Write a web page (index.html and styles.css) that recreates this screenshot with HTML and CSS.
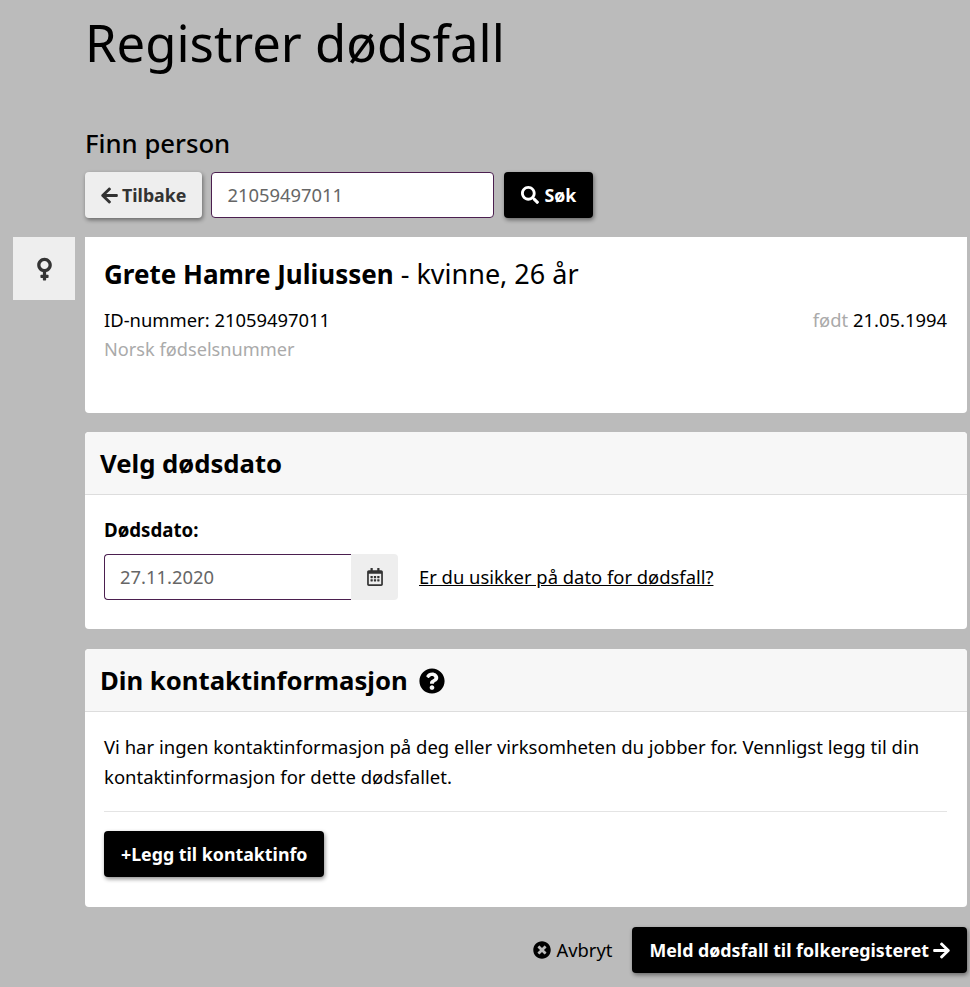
FILE: index.html
```html
<!DOCTYPE html>
<html lang="no">
  <head>
    <meta charset="UTF-8" />
    <meta name="viewport" content="width=device-width, initial-scale=1.0" />
    <title>Registrer dødsfall</title>
    <link rel="stylesheet" href="styles.css">
  </head>
  <body>
    <main class="page">
      <h1>Registrer dødsfall</h1>

      <h2 class="search-title">Finn person</h2>
      <div class="search-row">
        <button class="btn btn-light btn-back">
          <svg class="icon icon-arrow" viewBox="0 0 448 512"><path d="M257.5 445.1l-22.2 22.2c-9.4 9.4-24.6 9.4-33.9 0L7 273c-9.4-9.4-9.4-24.6 0-33.9L201.4 44.7c9.4-9.4 24.6-9.4 33.9 0l22.2 22.2c9.5 9.5 9.3 25-.4 34.3L136.6 216H424c13.3 0 24 10.7 24 24v32c0 13.3-10.7 24-24 24H136.6l120.5 114.8c9.8 9.3 10 24.8.4 34.3z"/></svg>
          Tilbake
        </button>
        <input class="field search-field" type="text" value="21059497011">
        <button class="btn btn-dark btn-search">
          <svg class="icon" viewBox="0 0 512 512"><path d="M505 442.7L405.3 343c-4.5-4.5-10.6-7-17-7H372c27.6-35.3 44-79.7 44-128C416 93.1 322.9 0 208 0S0 93.1 0 208s93.1 208 208 208c48.3 0 92.7-16.4 128-44v16.3c0 6.4 2.5 12.5 7 17l99.7 99.7c9.4 9.4 24.6 9.4 33.9 0l28.3-28.3c9.4-9.4 9.4-24.6.1-34zM208 336c-70.7 0-128-57.2-128-128 0-70.7 57.2-128 128-128 70.7 0 128 57.2 128 128 0 70.7-57.2 128-128 128z"/></svg>
          Søk
        </button>
      </div>

      <section class="card person">
        <div class="gender-tab">
          <svg class="gender-icon" viewBox="0 0 288 512"><path d="M288 176c0-79.5-64.5-144-144-144S0 96.5 0 176c0 68.5 47.9 125.9 112 140.4V368H76c-6.6 0-12 5.4-12 12v40c0 6.6 5.4 12 12 12h36v36c0 6.6 5.4 12 12 12h40c6.6 0 12-5.4 12-12v-36h36c6.6 0 12-5.4 12-12v-40c0-6.6-5.4-12-12-12h-36v-51.6c64.1-14.5 112-71.9 112-140.4zm-224 0c0-44.1 35.9-80 80-80s80 35.9 80 80-35.9 80-80 80-80-35.9-80-80z"/></svg>
        </div>
        <h3 class="person-name"><strong>Grete Hamre Juliussen</strong> - kvinne, 26 år</h3>
        <div class="person-row">
          <span>ID-nummer: 21059497011</span>
          <span><span class="muted">født</span> 21.05.1994</span>
        </div>
        <div class="muted person-type">Norsk fødselsnummer</div>
      </section>

      <section class="card">
        <h3 class="card-header">Velg dødsdato</h3>
        <div class="card-body date-body">
          <label class="date-label" for="dato">Dødsdato:</label>
          <div class="date-row">
            <input class="field date-field" id="dato" type="text" value="27.11.2020">
            <span class="date-addon">
              <svg class="icon" viewBox="0 0 448 512"><path d="M148 288h-40c-6.6 0-12-5.4-12-12v-40c0-6.6 5.4-12 12-12h40c6.6 0 12 5.4 12 12v40c0 6.6-5.4 12-12 12zm108-12v-40c0-6.6-5.4-12-12-12h-40c-6.6 0-12 5.4-12 12v40c0 6.6 5.4 12 12 12h40c6.6 0 12-5.4 12-12zm96 0v-40c0-6.6-5.4-12-12-12h-40c-6.6 0-12 5.4-12 12v40c0 6.6 5.4 12 12 12h40c6.6 0 12-5.4 12-12zm-96 96v-40c0-6.6-5.4-12-12-12h-40c-6.6 0-12 5.4-12 12v40c0 6.6 5.4 12 12 12h40c6.6 0 12-5.4 12-12zm-96 0v-40c0-6.6-5.4-12-12-12h-40c-6.6 0-12 5.4-12 12v40c0 6.6 5.4 12 12 12h40c6.6 0 12-5.4 12-12zm192 0v-40c0-6.6-5.4-12-12-12h-40c-6.6 0-12 5.4-12 12v40c0 6.6 5.4 12 12 12h40c6.6 0 12-5.4 12-12zm96-260v352c0 26.5-21.5 48-48 48H48c-26.5 0-48-21.5-48-48V112c0-26.5 21.5-48 48-48h48V12c0-6.6 5.4-12 12-12h40c6.6 0 12 5.4 12 12v52h128V12c0-6.6 5.4-12 12-12h40c6.6 0 12 5.4 12 12v52h48c26.5 0 48 21.5 48 48zm-48 346V160H48v298c0 3.3 2.7 6 6 6h340c3.3 0 6-2.7 6-6z"/></svg>
            </span>
            <a class="date-link" href="#">Er du usikker på dato for dødsfall?</a>
          </div>
        </div>
      </section>

      <section class="card">
        <h3 class="card-header">
          Din kontaktinformasjon
          <svg class="help-icon" viewBox="0 0 512 512"><path d="M504 256c0 136.997-111.043 248-248 248S8 392.997 8 256C8 119.083 119.043 8 256 8s248 111.083 248 248zM262.655 90c-54.497 0-89.255 22.957-116.549 63.758-3.536 5.286-2.353 12.415 2.715 16.258l34.699 26.31c5.205 3.947 12.621 3.008 16.665-2.122 17.864-22.658 30.113-35.797 57.303-35.797 20.429 0 45.698 13.148 45.698 32.958 0 14.976-12.363 22.667-32.534 33.976C247.128 238.528 216 254.941 216 296v4c0 6.627 5.373 12 12 12h56c6.627 0 12-5.373 12-12v-1.333c0-28.462 83.186-29.647 83.186-106.667 0-58.002-60.165-102-116.531-102zM256 338c-25.365 0-46 20.635-46 46 0 25.364 20.635 46 46 46s46-20.636 46-46c0-25.365-20.635-46-46-46z"/></svg>
        </h3>
        <div class="card-body contact-body">
          <p class="contact-text">Vi har ingen kontaktinformasjon på deg eller virksomheten du jobber for. Vennligst legg til din kontaktinformasjon for dette dødsfallet.</p>
          <hr class="divider">
          <button class="btn btn-dark">+Legg til kontaktinfo</button>
        </div>
      </section>

      <div class="actions">
        <a class="cancel" href="#">
          <svg class="icon" viewBox="0 0 512 512"><path d="M256 8C119 8 8 119 8 256s111 248 248 248 248-111 248-248S393 8 256 8zm121.6 313.1c4.7 4.7 4.7 12.3 0 17L338 377.6c-4.7 4.7-12.3 4.7-17 0L256 312l-65.1 65.6c-4.7 4.7-12.3 4.7-17 0L134.4 338c-4.7-4.7-4.7-12.3 0-17l65.6-65-65.6-65.1c-4.7-4.7-4.7-12.3 0-17l39.6-39.6c4.7-4.7 12.3-4.7 17 0l65 65.7 65.1-65.6c4.7-4.7 12.3-4.7 17 0l39.6 39.6c4.7 4.7 4.7 12.3 0 17L312 256l65.6 65.1z"/></svg>
          Avbryt
        </a>
        <button class="btn btn-dark">
          Meld dødsfall til folkeregisteret
          <svg class="icon icon-arrow" viewBox="0 0 448 512"><path d="M190.5 66.9l22.2-22.2c9.4-9.4 24.6-9.4 33.9 0L441 239c9.4 9.4 9.4 24.6 0 33.9L246.6 467.3c-9.4 9.4-24.6 9.4-33.9 0l-22.2-22.2c-9.5-9.5-9.3-25 .4-34.3L311.4 296H24c-13.3 0-24-10.7-24-24v-32c0-13.3 10.7-24 24-24h287.4L190.9 101.2c-9.8-9.3-10-24.8-.4-34.3z"/></svg>
        </button>
      </div>
    </main>
  </body>
</html>
```

FILE: styles.css
```css
body {
  margin: 0;
  background: #bbbbbb;
  color: #000;
  font-family: "Noto Sans", "Open Sans", sans-serif;
  font-size: 18.4px;
  line-height: 30px;
  overflow: hidden;
}
.page {
  height: 987px;
  box-sizing: border-box;
  padding: 0 3px 0 85px;
}
h1 {
  margin: 0;
  padding-top: 8px;
  font-size: 50.8px;
  font-weight: 400;
  line-height: 70px;
}
.search-title {
  margin: 47px 0 0;
  font-size: 25.7px;
  font-weight: 500;
  line-height: 38px;
}
.search-row {
  display: flex;
  gap: 9px;
  margin-top: 9px;
  margin-bottom: 19px;
}
.icon {
  width: 18px;
  height: 18px;
  fill: currentColor;
  flex: none;
}
.icon-arrow {
  width: 17px;
  height: 19px;
}
.btn {
  display: inline-flex;
  align-items: center;
  justify-content: center;
  gap: 4px;
  height: 46px;
  padding: 0 17px;
  border: 0;
  border-radius: 4px;
  font-family: inherit;
  font-size: 17.8px;
  font-weight: 700;
  box-shadow: 1px 2px 4px rgba(0, 0, 0, 0.45);
}
.btn-back {
  padding: 0 16px;
}
.btn-search {
  gap: 5px;
}
.btn-light {
  background: #eeeeee;
  color: #333;
}
.btn-dark {
  background: #000;
  color: #fff;
}
.field {
  height: 46px;
  box-sizing: border-box;
  padding: 0 15px 2px;
  border: 1px solid #4b1f4f;
  border-radius: 4px;
  background: #fff;
  color: #666;
  font-family: inherit;
  font-size: 18.4px;
}
.search-field {
  width: 283px;
  margin-right: 1px;
}
.card {
  position: relative;
  margin-bottom: 20px;
  border-radius: 4px;
  background: #fff;
}
.person {
  height: 176px;
  box-sizing: border-box;
  margin-bottom: 19px;
  padding: 19px 20px 0 19px;
  border-radius: 0 0 4px 4px;
}
.gender-tab {
  position: absolute;
  top: 0;
  left: -72px;
  width: 62px;
  height: 63px;
  display: flex;
  align-items: center;
  justify-content: center;
  background: #eeeeee;
}
.gender-icon {
  width: 15px;
  height: 26px;
  fill: #333;
}
.person-name {
  margin: 0 0 13px;
  font-size: 27px;
  font-weight: 400;
  line-height: 36px;
}
.person-name strong {
  font-size: 26px;
}
.person-row {
  display: flex;
  justify-content: space-between;
  line-height: 29px;
}
.person-type {
  padding-top: 1px;
  font-size: 18.2px;
  line-height: 29px;
}
.muted {
  color: #aaaaaa;
}
.card-header {
  display: flex;
  align-items: center;
  gap: 11px;
  height: 63px;
  box-sizing: border-box;
  margin: 0;
  padding: 2px 0 0 15px;
  border-bottom: 1px solid #dddddd;
  border-radius: 4px 4px 0 0;
  background: #f7f7f7;
  font-size: 25.7px;
  font-weight: 700;
}
.help-icon {
  width: 26px;
  height: 26px;
}
.card-body {
  padding: 0 20px 0 19px;
}
.date-body {
  height: 134px;
  box-sizing: border-box;
  padding-top: 20px;
}
.date-label {
  display: block;
  margin-bottom: 9px;
  font-size: 18.7px;
  font-weight: 700;
}
.date-row {
  display: flex;
  align-items: center;
}
.date-field {
  width: 247px;
  border-radius: 4px 0 0 4px;
  border-right: 0;
}
.date-addon {
  display: flex;
  align-items: center;
  justify-content: center;
  width: 47px;
  height: 46px;
  border-radius: 0 4px 4px 0;
  background: #eeeeee;
  color: #333;
}
.date-link {
  margin-left: 21px;
  color: #000;
}
.contact-body {
  padding-top: 20px;
  padding-bottom: 30px;
}
.contact-text {
  margin: 0 0 19px;
  font-size: 18.5px;
}
.divider {
  margin: 0 0 19px;
  border: 0;
  border-top: 1px solid #e4e4e4;
}
.actions {
  display: flex;
  justify-content: flex-end;
  align-items: center;
  gap: 20px;
}
.cancel {
  display: inline-flex;
  align-items: center;
  gap: 5px;
  color: #000;
  text-decoration: none;
}
```
